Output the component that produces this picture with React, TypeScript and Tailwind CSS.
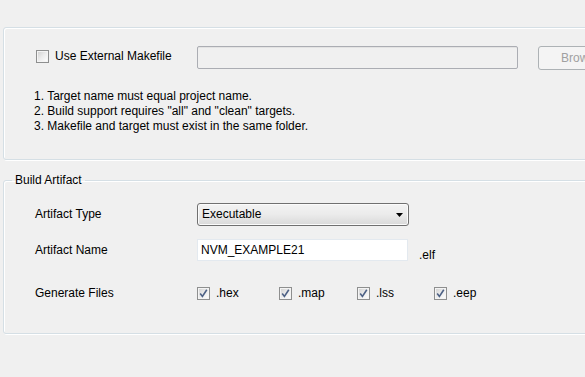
import React from "react";

function Box({ checked }: { checked?: boolean }) {
  return (
    <span className="relative inline-block h-[13px] w-[13px] shrink-0 border border-[#8e8f8f] bg-[#f4f4f4]">
      <span className="absolute inset-[1px] bg-gradient-to-br from-[#d4d4d4] via-[#ececec] to-[#fcfcfc]" />
      {checked && (
        <svg className="absolute left-[1px] top-[1px]" width="9" height="9" viewBox="0 0 9 9">
          <path d="M1.2 4.6 L3.4 7.4 L7.8 0.8" fill="none" stroke="#4d6185" strokeWidth="1.6" />
        </svg>
      )}
    </span>
  );
}

function Check({ label, className }: { label: string; className?: string }) {
  return (
    <div className={"flex shrink-0 items-center gap-[6px] " + (className ?? "")}>
      <Box checked />
      <span>{label}</span>
    </div>
  );
}

export default function App() {
  return (
    <div
      className="h-[377px] w-[585px] overflow-hidden bg-[#f0f0f0] pl-[3px] pt-[27px] text-[12px] leading-[15px] text-black"
      style={{ fontFamily: '"Liberation Sans", Arial, sans-serif' }}
    >
      <div className="mr-[-40px] h-[133px] rounded-[3px] border border-[#d5dfe5] shadow-[inset_1px_1px_0_#ffffff,1px_1px_0_#ffffff]">
        <div className="flex items-start pl-[32px] pt-[18px]">
          <div className="flex h-[21px] w-[161px] shrink-0 items-center gap-[6px]">
            <Box />
            <span>Use External Makefile</span>
          </div>
          <div className="h-[23px] w-[321px] shrink-0 rounded-[2px] border border-[#abadb3] bg-[#f0f0f0] shadow-[inset_0_1px_0_#e3e3e3]" />
          <div className="ml-[20px] flex h-[24px] w-[80px] shrink-0 items-center rounded-[3px] border border-[#adb2b5] bg-[#f4f4f4] pl-[22px] text-[#a0a0a0]">
            Browse...
          </div>
        </div>
        <div className="pl-[30px] pt-[19px]">
          <div>1. Target name must equal project name.</div>
          <div>2. Build support requires "all" and "clean" targets.</div>
          <div>3. Makefile and target must exist in the same folder.</div>
        </div>
      </div>

      <fieldset className="mr-[-20px] mt-[12px] h-[162px] rounded-[3px] border border-[#d5dfe5] shadow-[inset_1px_1px_0_#ffffff,1px_1px_0_#ffffff]">
        <legend className="ml-[8px] px-[3px] leading-[16px]">Build Artifact</legend>
        <div className="grid grid-cols-[162px_auto] items-center pl-[31px] pt-[15px]">
          <div>Artifact Type</div>
          <div className="relative flex h-[23px] w-[212px] items-center rounded-[3px] border border-[#707070] bg-gradient-to-b from-[#f3f3f3] via-[#ebebeb] to-[#d9d9d9] pl-[4px] shadow-[inset_0_0_0_1px_#fbfbfb]">
            Executable
            <svg className="absolute right-[5px] top-[9px]" width="7" height="4" viewBox="0 0 7 4">
              <path d="M0 0 H7 L3.5 4 Z" fill="#000" />
            </svg>
          </div>

          <div className="mt-[13px]">Artifact Name</div>
          <div className="mt-[13px] flex items-end">
            <div className="flex h-[22px] w-[211px] items-center border border-[#e3e9ef] bg-white pl-[3px]">
              NVM_EXAMPLE21
            </div>
            <span className="ml-[11px] mb-[-2px]">.elf</span>
          </div>

          <div className="mt-[25px]">Generate Files</div>
          <div className="mt-[25px] flex items-center">
            <Check label=".hex" className="w-[82px]" />
            <Check label=".map" className="w-[78px]" />
            <Check label=".lss" className="w-[77px]" />
            <Check label=".eep" />
          </div>
        </div>
      </fieldset>
    </div>
  );
}
